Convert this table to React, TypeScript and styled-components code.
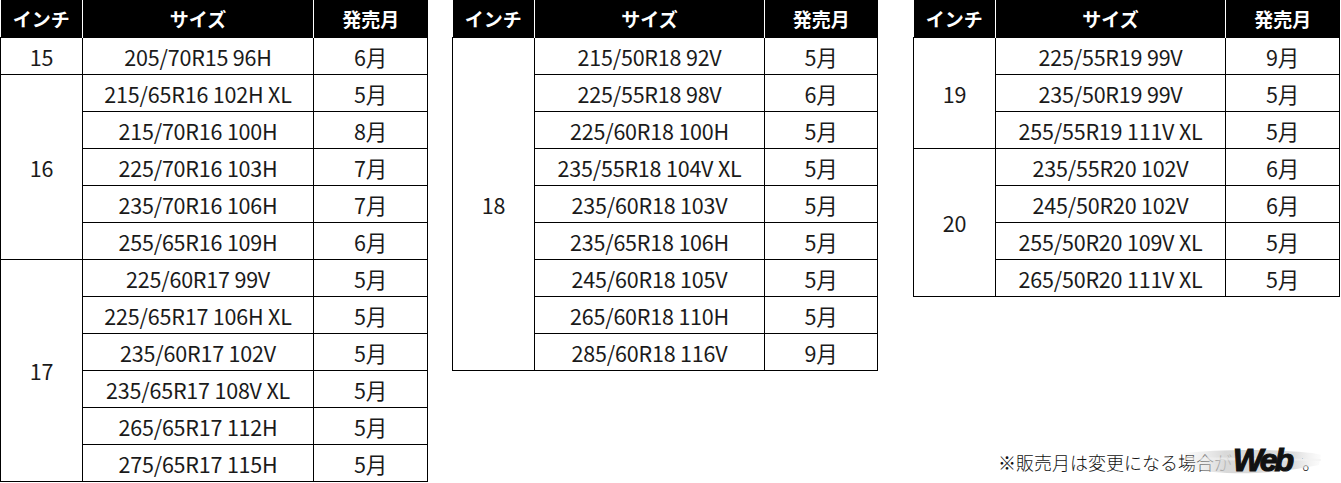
import styled, { createGlobalStyle } from "styled-components";

const GlobalStyle = createGlobalStyle`
  html, body {
    margin: 0;
    padding: 0;
    background: #fff;
  }
  body {
    font-family: "Noto Sans CJK JP", "Noto Sans", sans-serif;
    color: #1a1a1a;
  }
`;

type Row = { size: string; month: string };
type Group = { inch: string; rows: Row[] };
type TableData = { widths: [number, number, number]; groups: Group[] };

const tables: TableData[] = [
  {
    widths: [82, 231, 114],
    groups: [
      { inch: "15", rows: [{ size: "205/70R15 96H", month: "6月" }] },
      {
        inch: "16",
        rows: [
          { size: "215/65R16 102H XL", month: "5月" },
          { size: "215/70R16 100H", month: "8月" },
          { size: "225/70R16 103H", month: "7月" },
          { size: "235/70R16 106H", month: "7月" },
          { size: "255/65R16 109H", month: "6月" },
        ],
      },
      {
        inch: "17",
        rows: [
          { size: "225/60R17 99V", month: "5月" },
          { size: "225/65R17 106H XL", month: "5月" },
          { size: "235/60R17 102V", month: "5月" },
          { size: "235/65R17 108V XL", month: "5月" },
          { size: "265/65R17 112H", month: "5月" },
          { size: "275/65R17 115H", month: "5月" },
        ],
      },
    ],
  },
  {
    widths: [82, 230, 113],
    groups: [
      {
        inch: "18",
        rows: [
          { size: "215/50R18 92V", month: "5月" },
          { size: "225/55R18 98V", month: "6月" },
          { size: "225/60R18 100H", month: "5月" },
          { size: "235/55R18 104V XL", month: "5月" },
          { size: "235/60R18 103V", month: "5月" },
          { size: "235/65R18 106H", month: "5月" },
          { size: "245/60R18 105V", month: "5月" },
          { size: "265/60R18 110H", month: "5月" },
          { size: "285/60R18 116V", month: "9月" },
        ],
      },
    ],
  },
  {
    widths: [82, 230, 114],
    groups: [
      {
        inch: "19",
        rows: [
          { size: "225/55R19 99V", month: "9月" },
          { size: "235/50R19 99V", month: "5月" },
          { size: "255/55R19 111V XL", month: "5月" },
        ],
      },
      {
        inch: "20",
        rows: [
          { size: "235/55R20 102V", month: "6月" },
          { size: "245/50R20 102V", month: "6月" },
          { size: "255/50R20 109V XL", month: "5月" },
          { size: "265/50R20 111V XL", month: "5月" },
        ],
      },
    ],
  },
];

const Page = styled.div`
  display: flex;
  align-items: stretch;
  width: 1341px;
  height: 483px;
  box-sizing: border-box;
`;

const Column = styled.div<{ $gapBefore: number }>`
  display: flex;
  flex-direction: column;
  margin-left: ${(p) => p.$gapBefore}px;
`;

const Table = styled.table`
  border-collapse: collapse;
  table-layout: fixed;
`;

const HeadCell = styled.th`
  height: 37px;
  padding: 0;
  background: #000;
  color: #fff;
  font-size: 19px;
  font-weight: 700;
  text-align: center;
  border-left: 1px solid #fff;
  &:first-child {
    border-left: none;
  }
`;

const Cell = styled.td`
  height: 36px;
  padding: 0;
  border: 1px solid #000;
  font-size: 21.5px;
  font-weight: 400;
  text-align: center;
  vertical-align: middle;
  white-space: nowrap;
  letter-spacing: -0.2px;
`;

const Note = styled.div`
  position: relative;
  margin-top: auto;
  margin-bottom: 9px;
  margin-left: 85px;
  font-size: 18px;
  font-weight: 300;
  line-height: 24px;
  color: #111;
  white-space: nowrap;
`;

const Logo = styled.div`
  position: absolute;
  left: 184px;
  top: -6px;
  width: 140px;
  height: 32px;
  display: flex;
  align-items: center;
  justify-content: center;
`;

const Brush = styled.svg`
  position: absolute;
  inset: 0;
`;

const LogoWord = styled.span`
  position: relative;
  margin-left: 20px;
  font-family: "Liberation Sans", Arial, sans-serif;
  font-size: 32px;
  line-height: 30px;
  font-weight: 900;
  font-style: italic;
  letter-spacing: -3px;
  color: #111;
  -webkit-text-stroke: 1.2px #111;
`;

function TireTable({ data }: { data: TableData }) {
  return (
    <Table style={{ width: data.widths.reduce((a, b) => a + b, 0) }}>
      <colgroup>
        {data.widths.map((w, i) => (
          <col key={i} style={{ width: w }} />
        ))}
      </colgroup>
      <thead>
        <tr>
          <HeadCell>インチ</HeadCell>
          <HeadCell>サイズ</HeadCell>
          <HeadCell>発売月</HeadCell>
        </tr>
      </thead>
      <tbody>
        {data.groups.map((g) =>
          g.rows.map((r, i) => (
            <tr key={g.inch + r.size}>
              {i === 0 && <Cell rowSpan={g.rows.length}>{g.inch}</Cell>}
              <Cell>{r.size}</Cell>
              <Cell>{r.month}</Cell>
            </tr>
          ))
        )}
      </tbody>
    </Table>
  );
}

export default function App() {
  return (
    <>
      <GlobalStyle />
      <Page>
        <Column $gapBefore={0}>
          <TireTable data={tables[0]} />
        </Column>
        <Column $gapBefore={24}>
          <TireTable data={tables[1]} />
        </Column>
        <Column $gapBefore={35}>
          <TireTable data={tables[2]} />
          <Note>
            ※販売月は変更になる場合があります。
            <Logo>
              <Brush viewBox="0 0 140 32" preserveAspectRatio="none">
                <defs>
                  <linearGradient id="brushFade" x1="0" x2="1" y1="0" y2="0">
                    <stop offset="0" stopColor="#e4e4e4" stopOpacity="0.15" />
                    <stop offset="0.3" stopColor="#d2d2d2" stopOpacity="0.85" />
                    <stop offset="0.8" stopColor="#d8d8d8" stopOpacity="0.9" />
                    <stop offset="1" stopColor="#eeeeee" stopOpacity="0.2" />
                  </linearGradient>
                </defs>
                <path d="M52 6 L120 6 L120 28 L52 28 Z" fill="#fff" />
                <path
                  d="M2 9 C30 6 70 5 105 7 C122 8 134 9 139 11 L137 21 C120 24 100 28 74 29 C48 30 24 28 8 25 Z"
                  fill="url(#brushFade)"
                />
                <path d="M4 13 L139 15 L139 17 L4 16 Z" fill="#f2f2f2" opacity="0.6" />
              </Brush>
              <LogoWord>Web</LogoWord>
            </Logo>
          </Note>
        </Column>
      </Page>
    </>
  );
}
